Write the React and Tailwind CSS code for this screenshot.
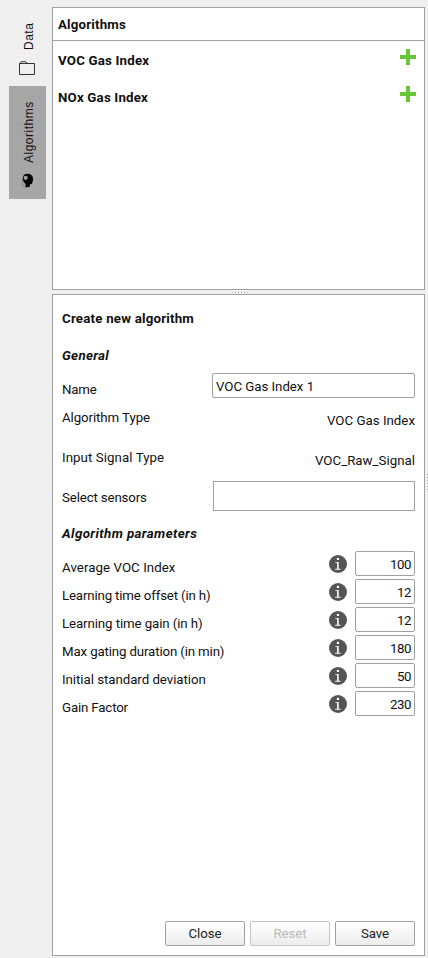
const PARAMETERS = [
  { label: 'Average VOC Index', value: '100', track: 'tracking-[0.05px]' },
  { label: 'Learning time offset (in h)', value: '12', track: 'tracking-[-0.17px]' },
  { label: 'Learning time gain (in h)', value: '12', track: 'tracking-[-0.11px]' },
  { label: 'Max gating duration (in min)', value: '180', track: 'tracking-[-0.15px]' },
  { label: 'Initial standard deviation', value: '50', track: 'tracking-[-0.05px]' },
  { label: 'Gain Factor', value: '230', track: 'tracking-[-0.17px]' },
];

function Plus() {
  return (
    <svg width="16" height="16" viewBox="0 0 16 16" shapeRendering="crispEdges">
      <path d="M6 0h4v6h6v4h-6v6H6v-6H0V6h6z" fill="#66c837" />
    </svg>
  );
}

function Info() {
  return (
    <svg width="18" height="18" viewBox="0 0 18 18">
      <circle cx="9" cy="9" r="9" fill="#555" />
      <circle cx="8.900" cy="3.900" r="1.200" fill="#fff" />
      <path d="M6.300 6.900h3.400v6.900h1.900v.9H6.200v-.9h1.900V7.800H6.300z" fill="#fff" />
    </svg>
  );
}

function Folder() {
  return (
    <svg width="16" height="14" viewBox="0 0 16 14" fill="none" stroke="#333">
      <path d="M.5 13.5v-11h15v11zM1 2.500 2.200.7h4.600L8.500 2.500" />
    </svg>
  );
}

function Head() {
  return (
    <svg width="14" height="16" viewBox="0 0 14 16">
      <path d="M1.500 5v7l2 2.500H7" fill="none" stroke="#8b8b8b" strokeWidth="1.200" />
      <path d="M6.300.8C9.500.8 12 2.800 12 5.500v2.200l-.6 1.300-.4 2-2 .3-.4 2.700H4.500v-3.200C2.800 9.600 1.800 7.800 1.800 5.600 1.800 2.800 3.500.8 6.300.8z" fill="#050505" />
      <circle cx="4.700" cy="4.800" r="2.100" fill="#a0a0a0" />
    </svg>
  );
}

function AlgorithmRow({ name }) {
  return (
    <div className="flex h-[37px] items-start justify-between pl-[5px] pr-2">
      <span className="pt-1 font-bold leading-4 tracking-[0.18px]">{name}</span>
      <Plus />
    </div>
  );
}

function Button({ children, disabled }) {
  return (
    <button
      disabled={disabled}
      className={`h-[25px] w-20 rounded-[2px] border bg-linear-to-b from-white to-[#ececec] pt-px leading-5 tracking-[-0.1px] ${
        disabled ? 'border-[#c4c4c4] text-[#b9b9b9]' : 'border-[#a0a0a0] text-[#222]'
      }`}
    >
      {children}
    </button>
  );
}

export default function App() {
  return (
    <div className="relative flex h-[958px] w-[428px] overflow-hidden bg-[#efefef] font-[Roboto,'Liberation_Sans',sans-serif] text-[13.3px] text-[#111]">
      <nav className="flex w-[52px] shrink-0 flex-col pl-[9px] font-['Liberation_Sans',sans-serif] text-[12px]">
        <div className="flex h-[86px] w-[37px] flex-col items-center pt-[23px]">
          <span className="ml-[2px] h-[27px] rotate-180 leading-4 tracking-[0.5px] [writing-mode:vertical-rl]">Data</span>
          <span className="mr-[2px] mt-[11px]"><Folder /></span>
        </div>
        <div className="flex h-[113px] w-[37px] flex-col items-center bg-[#a6a6a6] pt-[15px]">
          <span className="ml-[2px] h-[62px] rotate-180 leading-4 tracking-[0.5px] [writing-mode:vertical-rl]">Algorithms</span>
          <span className="mt-[10px]"><Head /></span>
        </div>
      </nav>

      <main className="flex w-[373px] shrink-0 flex-col pt-[7px]">
        <section className="h-[283px] border border-[#a0a0a0] bg-white">
          <h2 className="h-[33px] border-b border-[#a0a0a0] pl-[5px] pt-2 font-bold leading-[18px] tracking-[0.17px]">
            Algorithms
          </h2>
          <div className="pt-2">
            <AlgorithmRow name="VOC Gas Index" />
            <AlgorithmRow name="NOx Gas Index" />
          </div>
        </section>

        <div className="flex h-1 items-center justify-center gap-[2px] pl-[2px]">
          {[0, 1, 2, 3, 4, 5].map((n) => (
            <i key={n} className="size-px bg-[#aaa]" />
          ))}
        </div>

        <section className="flex h-[662px] flex-col border border-[#a0a0a0] bg-white px-[9px]">
          <h2 className="h-12 font-bold leading-[48px] tracking-[0.2px]">Create new algorithm</h2>
          <h3 className="h-[30px] font-bold italic leading-[26px] tracking-[0.32px]">General</h3>

          <div className="flex h-[25px] justify-between">
            <label className="pt-2 leading-[18px] tracking-[-0.25px]">Name</label>
            <div className="w-[203px] rounded-[2px] border border-[#a0a0a0] pl-[3px] pt-px leading-[23px] tracking-[-0.05px]">
              VOC Gas Index 1
            </div>
          </div>
          <div className="flex h-10 justify-between leading-10">
            <span className="tracking-[-0.1px]">Algorithm Type</span>
            <span className="pt-[3px]">VOC Gas Index</span>
          </div>
          <div className="flex h-10 justify-between leading-10">
            <span className="tracking-[0.06px]">Input Signal Type</span>
            <span className="pt-[3px]">VOC_Raw_Signal</span>
          </div>
          <div className="mt-[3px] flex h-[30px] justify-between">
            <label className="leading-[33px] tracking-[-0.15px]">Select sensors</label>
            <div className="w-[202px] border border-[#a0a0a0]" />
          </div>

          <h3 className="h-10 font-bold italic leading-[45px] tracking-[0.4px]">Algorithm parameters</h3>
          <div className="flex flex-col gap-[3px]">
            {PARAMETERS.map((p) => (
              <div key={p.label} className="flex h-[25px]">
                <label className={`grow pt-2 leading-[18px] ${p.track}`}>{p.label}</label>
                <span className="mr-2 pt-1"><Info /></span>
                <div className="w-[60px] rounded-[2px] border border-[#a0a0a0] pr-[3px] pt-px text-right leading-[23px] tracking-[-0.45px]">
                  {p.value}
                </div>
              </div>
            ))}
          </div>

          <div className="mb-[9px] mt-auto flex justify-end gap-[5px]">
            <Button>Close</Button>
            <Button disabled>Reset</Button>
            <Button>Save</Button>
          </div>
        </section>
      </main>

      <div className="grid w-[3px] shrink-0 grid-cols-1 content-center gap-[2px] pl-[2px] pt-[6px]">
        {[0, 1, 2, 3, 4, 5].map((n) => (
          <i key={n} className="size-px bg-[#aaa]" />
        ))}
      </div>
    </div>
  );
}
